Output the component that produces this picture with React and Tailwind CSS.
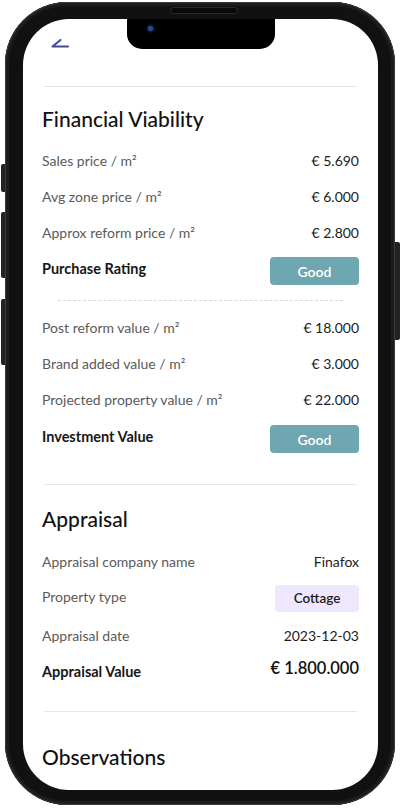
import React from 'react'

const font = { fontFamily: 'Lato, "Noto Sans", sans-serif' }

function Row({ label, value, h = 'h-[36px]' }) {
  return (
    <div className={`flex items-center justify-between ${h}`}>
      <span className="text-[14px] text-[#5a5a5a]">{label}</span>
      <span className="text-[14px] text-[#1c1c1c]">{value}</span>
    </div>
  )
}

function RatingRow({ label, h }) {
  return (
    <div className={`flex items-center justify-between ${h}`}>
      <span className="text-[14.5px] font-bold text-[#161616] -mt-[4px]">{label}</span>
      <span className="flex h-[28px] w-[89px] items-center justify-center rounded-[4px] bg-[#6ea7b1] text-[14px] font-semibold text-white">
        Good
      </span>
    </div>
  )
}

export default function App() {
  return (
    <div className="relative h-[811px] w-[401px] overflow-hidden bg-white" style={font}>
      {/* side buttons */}
      <div className="absolute left-[1px] top-[164px] h-[28px] w-[5px] rounded-l-[2px] bg-[#232325]" />
      <div className="absolute left-[1px] top-[212px] h-[66px] w-[5px] rounded-l-[2px] bg-[#232325]" />
      <div className="absolute left-[1px] top-[299px] h-[66px] w-[5px] rounded-l-[2px] bg-[#232325]" />
      <div className="absolute right-[1px] top-[242px] h-[98px] w-[5px] rounded-r-[2px] bg-[#232325]" />

      {/* phone body */}
      <div className="relative ml-[5px] mt-[2px] h-[803px] w-[390px] rounded-[62px] bg-[#111112] pb-[15px] pl-[18px] pr-[17px] pt-[17px] shadow-[inset_0_0_0_1px_#3a3a3c,inset_0_0_0_4px_#1c1c1e]">
        {/* speaker grille */}
        <div className="absolute left-[166px] top-[6px] h-[5px] w-[66px] rounded-full bg-[#0a0a0a] shadow-[0_0_0_1px_#2a2a2c]" />
        <div className="relative h-full w-full overflow-hidden rounded-[46px] bg-white">
          {/* notch */}
          <div className="absolute left-[104px] top-0 flex h-[30px] w-[148px] items-start rounded-b-[15px] bg-black pl-[21px] pt-[7px]">
            <div className="h-[5px] w-[5px] rounded-full bg-[#2a4a8a] shadow-[0_0_3px_#3b6fd0]" />
          </div>

          {/* header */}
          <div className="h-[67px] pl-[28px] pt-[20px]">
            <svg width="18" height="10" viewBox="0 0 18 10" fill="none">
              <path d="M9.5 1 L1.5 7.5 L17 7.5" stroke="#3d4b9e" strokeWidth="2" strokeLinecap="round" strokeLinejoin="round" />
            </svg>
          </div>

          <div className="px-[19px]">
            <div className="mx-[2px] h-px bg-[#e6e6e8]" />

            <h2 className="mt-[18px] h-[28px] text-[21px] font-medium leading-[28px] text-[#111]">Financial Viability</h2>
            <div className="mt-[9px]">
              <Row label="Sales price / m²" value="€ 5.690" />
              <Row label="Avg zone price / m²" value="€ 6.000" />
              <Row label="Approx reform price / m²" value="€ 2.800" />
              <RatingRow label="Purchase Rating" h="h-[42px]" />
            </div>

            <div className="mx-[16px] mt-[8px] border-t border-dashed border-[#d8d8d8]" />

            <div className="mt-[8px]">
              <Row label="Post reform value / m²" value="€ 18.000" />
              <Row label="Brand added value / m²" value="€ 3.000" />
              <Row label="Projected property value / m²" value="€ 22.000" />
              <RatingRow label="Investment Value" h="h-[44px]" />
            </div>

            <div className="mx-[2px] mt-[23px] h-px bg-[#e6e6e8]" />

            <h2 className="mt-[20px] h-[28px] text-[21px] font-medium leading-[28px] text-[#111]">Appraisal</h2>
            <div className="mt-[10px]">
              <Row label="Appraisal company name" value="Finafox" />
              <div className="flex h-[39px] items-center justify-between">
                <span className="-mt-[5px] text-[14px] text-[#5a5a5a]">Property type</span>
                <span className="flex h-[27px] w-[84px] items-center justify-center rounded-[4px] bg-[#efe7fb] text-[13.5px] font-semibold text-[#1c1c1c]">
                  Cottage
                </span>
              </div>
              <Row label="Appraisal date" value="2023-12-03" h="h-[34px]" />
              <div className="flex h-[38px] items-center justify-between">
                <span className="mt-[2px] text-[14.5px] font-bold text-[#161616]">Appraisal Value</span>
                <span className="-mt-[6px] text-[16.5px] font-semibold text-[#111]">€ 1.800.000</span>
              </div>
            </div>

            <div className="mx-[2px] mt-[21px] h-px bg-[#e6e6e8]" />

            <h2 className="mt-[31px] h-[28px] text-[21px] font-medium leading-[28px] text-[#111]">Observations</h2>
          </div>
        </div>
      </div>
    </div>
  )
}
